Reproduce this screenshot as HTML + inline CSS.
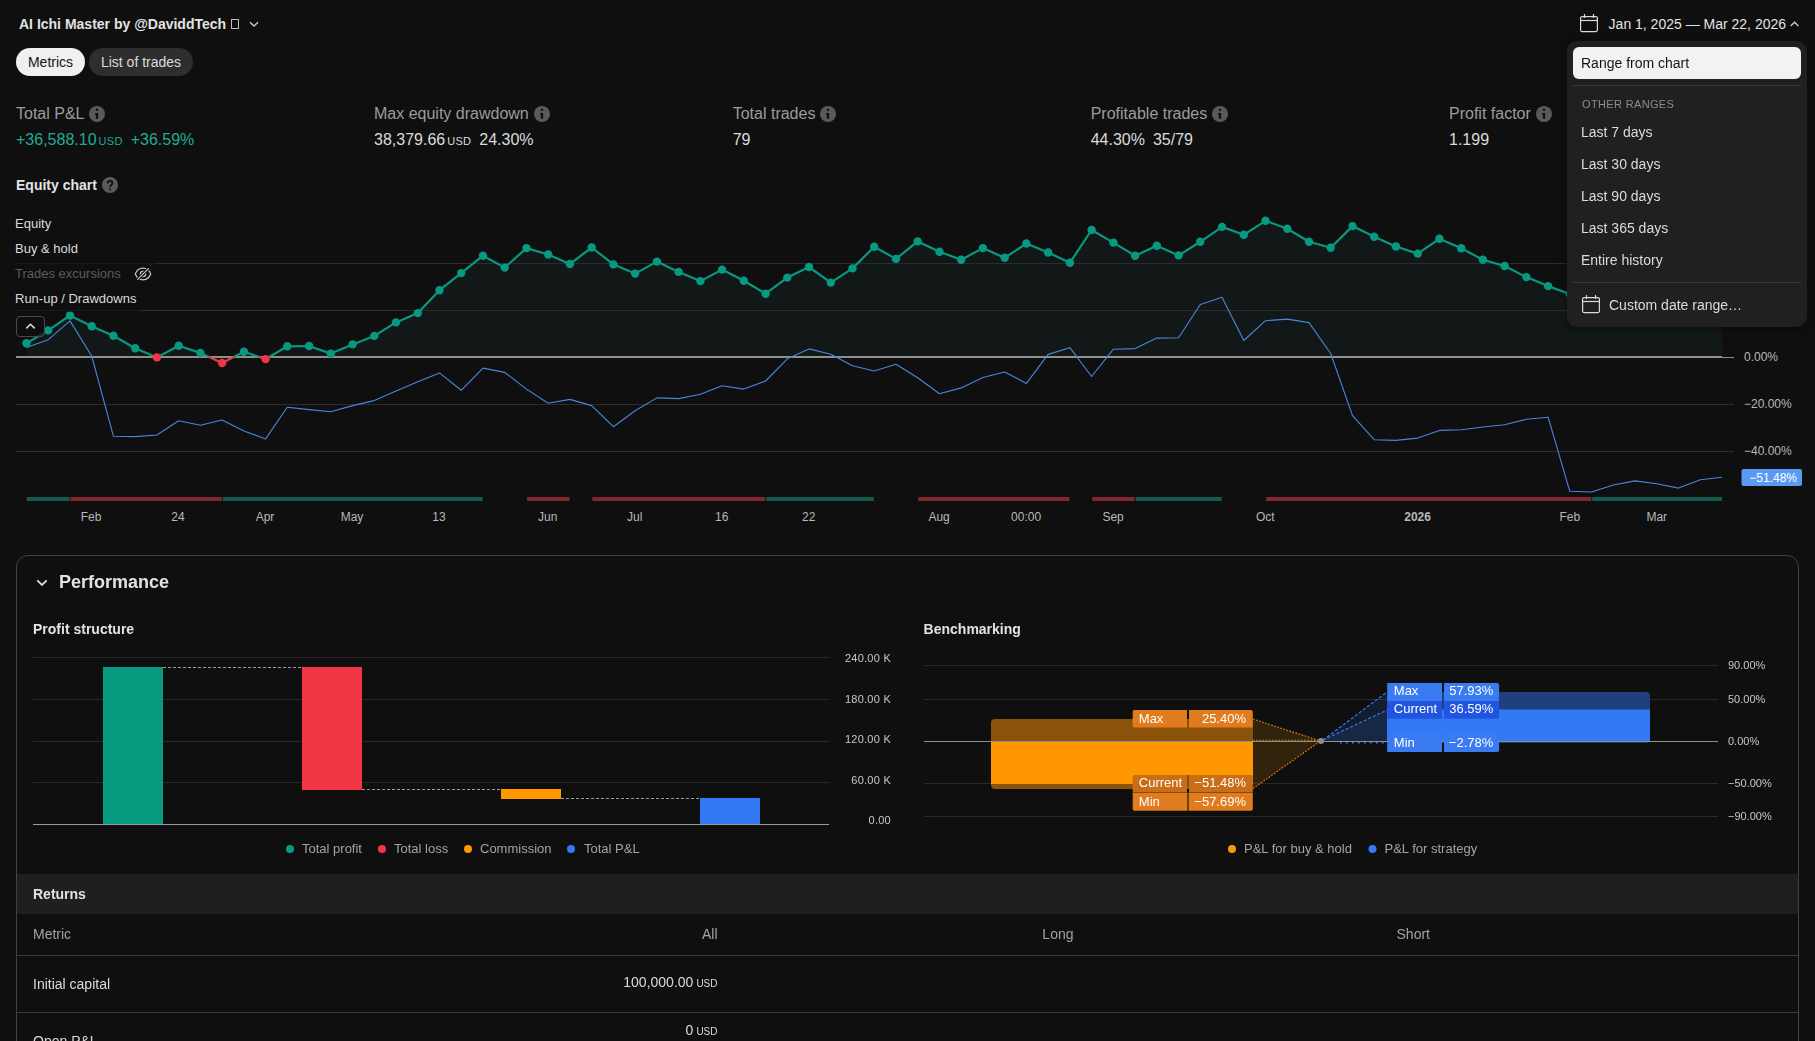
<!DOCTYPE html>
<html>
<head>
<meta charset="utf-8">
<style>
html,body{margin:0;padding:0;}
body{width:1815px;height:1041px;overflow:hidden;background:#0f0f0f;position:relative;font-family:"Liberation Sans",sans-serif;color:#dbdbdb;}
.a{position:absolute;white-space:nowrap;line-height:1;}
svg{position:absolute;left:0;top:0;}
.pill{position:absolute;height:28px;border-radius:14px;font-size:14px;line-height:28px;text-align:center;}
.lbl{font-size:16px;color:#9c9c9c;}
.val{font-size:16px;color:#dbdbdb;}
.usd{font-size:11px;letter-spacing:0.3px;}
.leg{font-size:13px;color:#dbdbdb;}
.dd{font-size:14px;color:#dbdbdb;}
.th{font-size:14px;color:#a3a3a3;}
.td{font-size:14px;color:#dbdbdb;}
</style>
</head>
<body>
<!-- Header -->
<div class="a" style="left:19px;top:17px;font-size:14px;font-weight:bold;color:#e3e3e3;">AI Ichi Master by @DaviddTech</div>
<div class="a" style="left:231px;top:19px;width:6px;height:8px;border:1px solid #bdbdbd;"></div>
<svg width="1815" height="1041" style="pointer-events:none">
  <path d="M250,22.3 L254,26 L258,22.3" fill="none" stroke="#c9c9c9" stroke-width="1.5"/>
</svg>

<div class="pill" style="left:16px;top:48px;width:69px;background:#f0f0f0;color:#131313;">Metrics</div>
<div class="pill" style="left:89px;top:48px;width:104px;background:#2e2e2e;color:#dbdbdb;">List of trades</div>

<!-- Metrics row -->
<div class="a lbl" style="left:16px;top:106px;">Total P&amp;L</div>
<div class="a val" style="left:16px;top:132px;color:#22ab94;">+36,588.10<span class="usd" style="margin-left:2px;">USD</span><span style="margin-left:8px;">+36.59%</span></div>
<div class="a lbl" style="left:374px;top:106px;">Max equity drawdown</div>
<div class="a val" style="left:374px;top:132px;">38,379.66<span class="usd" style="margin-left:2px;">USD</span><span style="margin-left:8px;">24.30%</span></div>
<div class="a lbl" style="left:732.7px;top:106px;">Total trades</div>
<div class="a val" style="left:732.7px;top:132px;">79</div>
<div class="a lbl" style="left:1090.7px;top:106px;">Profitable trades</div>
<div class="a val" style="left:1090.7px;top:132px;">44.30%<span style="margin-left:8px;">35/79</span></div>
<div class="a lbl" style="left:1449px;top:106px;">Profit factor</div>
<div class="a val" style="left:1449px;top:132px;">1.199</div>

<div class="a" style="left:16px;top:178px;font-size:14px;font-weight:bold;color:#e3e3e3;">Equity chart</div>

<!-- Equity chart SVG -->
<svg width="1815" height="1041">
  <defs>
    <clipPath id="above"><rect x="0" y="0" width="1815" height="357"/></clipPath>
    <clipPath id="below"><rect x="0" y="357" width="1815" height="700"/></clipPath>
  </defs>
  <!-- grid -->
  <path d="M26.5,357.0 L26.5,343.2 L48.2,330.4 L70.0,315.5 L91.7,326.3 L113.4,335.8 L135.2,348.2 L156.9,357.4 L178.7,345.8 L200.4,352.9 L222.1,363.0 L243.9,351.7 L265.6,359.1 L287.3,346.3 L309.1,346.0 L330.8,353.6 L352.6,344.4 L374.3,335.9 L396.0,322.4 L417.8,313.1 L439.5,290.2 L461.2,273.1 L483.0,255.7 L504.7,267.6 L526.5,248.1 L548.2,254.5 L569.9,264.0 L591.7,247.5 L613.4,264.4 L635.1,273.6 L656.9,261.6 L678.6,271.9 L700.4,281.1 L722.1,269.6 L743.8,280.7 L765.6,293.7 L787.3,277.6 L809.0,267.0 L830.8,282.6 L852.5,268.4 L874.2,246.7 L896.0,258.9 L917.7,241.4 L939.5,251.7 L961.2,259.7 L982.9,248.1 L1004.7,257.8 L1026.4,243.5 L1048.1,252.5 L1069.9,262.7 L1091.6,230.0 L1113.4,242.6 L1135.1,255.7 L1156.8,245.7 L1178.6,255.4 L1200.3,241.8 L1222.0,226.9 L1243.8,234.8 L1265.5,220.8 L1287.3,228.8 L1309.0,241.8 L1330.7,247.8 L1352.5,226.1 L1374.2,236.7 L1395.9,246.5 L1417.7,253.6 L1439.4,238.8 L1461.2,248.3 L1482.9,259.7 L1504.6,266.0 L1526.4,277.1 L1548.1,286.1 L1569.8,294.0 L1591.6,300.0 L1613.3,292.0 L1635.1,286.0 L1656.8,281.0 L1678.5,284.0 L1700.3,277.0 L1722.0,271.0 L1722.0,357.0 Z" fill="#111817" clip-path="url(#above)"/>
  <g stroke="#2c2c2c" stroke-width="1">
    <line x1="16" y1="263.5" x2="1734" y2="263.5"/>
    <line x1="16" y1="310.5" x2="1734" y2="310.5"/>
    <line x1="16" y1="404.5" x2="1734" y2="404.5"/>
    <line x1="16" y1="451.5" x2="1734" y2="451.5"/>
  </g>
  <line x1="16" y1="357" x2="1722" y2="357" stroke="#8f8f8f" stroke-width="2"/>
  <line x1="1722" y1="357.5" x2="1734" y2="357.5" stroke="#8f8f8f" stroke-width="1"/>
  <polyline points="26.5,347.4 48.2,339.7 70.0,320.9 91.7,356.0 113.4,436.2 135.2,436.6 156.9,435.0 178.7,420.7 200.4,425.3 222.1,420.0 243.9,430.9 265.6,438.9 287.3,407.3 309.1,409.6 330.8,411.7 352.6,405.6 374.3,400.6 396.0,390.9 417.8,381.7 439.5,372.9 461.2,390.3 483.0,368.1 504.7,372.4 526.5,389.1 548.2,403.3 569.9,399.4 591.7,405.6 613.4,426.7 635.1,410.7 656.9,397.9 678.6,398.6 700.4,394.3 722.1,385.7 743.8,389.1 765.6,381.0 787.3,358.8 809.0,348.9 830.8,354.2 852.5,365.8 874.2,371.0 896.0,364.2 917.7,377.8 939.5,393.7 961.2,387.9 982.9,377.5 1004.7,372.0 1026.4,383.4 1048.1,354.4 1069.9,347.7 1091.6,376.5 1113.4,349.2 1135.1,348.6 1156.8,338.1 1178.6,337.8 1200.3,304.5 1222.0,297.2 1243.8,340.5 1265.5,320.7 1287.3,319.1 1309.0,322.6 1330.7,353.5 1352.5,415.6 1374.2,439.7 1395.9,440.4 1417.7,438.1 1439.4,430.4 1461.2,429.7 1482.9,427.0 1504.6,424.7 1526.4,419.3 1548.1,417.2 1569.8,491.3 1591.6,492.0 1613.3,485.0 1635.1,480.9 1656.8,483.7 1678.5,488.1 1700.3,479.7 1722.0,477.2" fill="none" stroke="#4a86dc" stroke-width="1.1" stroke-linejoin="round"/>
  <polyline points="26.5,343.2 48.2,330.4 70.0,315.5 91.7,326.3 113.4,335.8 135.2,348.2 156.9,357.4 178.7,345.8 200.4,352.9 222.1,363.0 243.9,351.7 265.6,359.1 287.3,346.3 309.1,346.0 330.8,353.6 352.6,344.4 374.3,335.9 396.0,322.4 417.8,313.1 439.5,290.2 461.2,273.1 483.0,255.7 504.7,267.6 526.5,248.1 548.2,254.5 569.9,264.0 591.7,247.5 613.4,264.4 635.1,273.6 656.9,261.6 678.6,271.9 700.4,281.1 722.1,269.6 743.8,280.7 765.6,293.7 787.3,277.6 809.0,267.0 830.8,282.6 852.5,268.4 874.2,246.7 896.0,258.9 917.7,241.4 939.5,251.7 961.2,259.7 982.9,248.1 1004.7,257.8 1026.4,243.5 1048.1,252.5 1069.9,262.7 1091.6,230.0 1113.4,242.6 1135.1,255.7 1156.8,245.7 1178.6,255.4 1200.3,241.8 1222.0,226.9 1243.8,234.8 1265.5,220.8 1287.3,228.8 1309.0,241.8 1330.7,247.8 1352.5,226.1 1374.2,236.7 1395.9,246.5 1417.7,253.6 1439.4,238.8 1461.2,248.3 1482.9,259.7 1504.6,266.0 1526.4,277.1 1548.1,286.1 1569.8,294.0 1591.6,300.0 1613.3,292.0 1635.1,286.0 1656.8,281.0 1678.5,284.0 1700.3,277.0 1722.0,271.0" fill="none" stroke="#089981" stroke-width="2.2" stroke-linejoin="round" clip-path="url(#above)"/>
  <polyline points="26.5,343.2 48.2,330.4 70.0,315.5 91.7,326.3 113.4,335.8 135.2,348.2 156.9,357.4 178.7,345.8 200.4,352.9 222.1,363.0 243.9,351.7 265.6,359.1 287.3,346.3 309.1,346.0 330.8,353.6 352.6,344.4 374.3,335.9 396.0,322.4 417.8,313.1 439.5,290.2 461.2,273.1 483.0,255.7 504.7,267.6 526.5,248.1 548.2,254.5 569.9,264.0 591.7,247.5 613.4,264.4 635.1,273.6 656.9,261.6 678.6,271.9 700.4,281.1 722.1,269.6 743.8,280.7 765.6,293.7 787.3,277.6 809.0,267.0 830.8,282.6 852.5,268.4 874.2,246.7 896.0,258.9 917.7,241.4 939.5,251.7 961.2,259.7 982.9,248.1 1004.7,257.8 1026.4,243.5 1048.1,252.5 1069.9,262.7 1091.6,230.0 1113.4,242.6 1135.1,255.7 1156.8,245.7 1178.6,255.4 1200.3,241.8 1222.0,226.9 1243.8,234.8 1265.5,220.8 1287.3,228.8 1309.0,241.8 1330.7,247.8 1352.5,226.1 1374.2,236.7 1395.9,246.5 1417.7,253.6 1439.4,238.8 1461.2,248.3 1482.9,259.7 1504.6,266.0 1526.4,277.1 1548.1,286.1 1569.8,294.0 1591.6,300.0 1613.3,292.0 1635.1,286.0 1656.8,281.0 1678.5,284.0 1700.3,277.0 1722.0,271.0" fill="none" stroke="#f23645" stroke-width="2.2" stroke-linejoin="round" clip-path="url(#below)"/>
  <circle cx="26.5" cy="343.2" r="4.2" fill="#089981"/>
<circle cx="48.2" cy="330.4" r="4.2" fill="#089981"/>
<circle cx="70.0" cy="315.5" r="4.2" fill="#089981"/>
<circle cx="91.7" cy="326.3" r="4.2" fill="#089981"/>
<circle cx="113.4" cy="335.8" r="4.2" fill="#089981"/>
<circle cx="135.2" cy="348.2" r="4.2" fill="#089981"/>
<circle cx="156.9" cy="357.4" r="4.2" fill="#f23645"/>
<circle cx="178.7" cy="345.8" r="4.2" fill="#089981"/>
<circle cx="200.4" cy="352.9" r="4.2" fill="#089981"/>
<circle cx="222.1" cy="363.0" r="4.2" fill="#f23645"/>
<circle cx="243.9" cy="351.7" r="4.2" fill="#089981"/>
<circle cx="265.6" cy="359.1" r="4.2" fill="#f23645"/>
<circle cx="287.3" cy="346.3" r="4.2" fill="#089981"/>
<circle cx="309.1" cy="346.0" r="4.2" fill="#089981"/>
<circle cx="330.8" cy="353.6" r="4.2" fill="#089981"/>
<circle cx="352.6" cy="344.4" r="4.2" fill="#089981"/>
<circle cx="374.3" cy="335.9" r="4.2" fill="#089981"/>
<circle cx="396.0" cy="322.4" r="4.2" fill="#089981"/>
<circle cx="417.8" cy="313.1" r="4.2" fill="#089981"/>
<circle cx="439.5" cy="290.2" r="4.2" fill="#089981"/>
<circle cx="461.2" cy="273.1" r="4.2" fill="#089981"/>
<circle cx="483.0" cy="255.7" r="4.2" fill="#089981"/>
<circle cx="504.7" cy="267.6" r="4.2" fill="#089981"/>
<circle cx="526.5" cy="248.1" r="4.2" fill="#089981"/>
<circle cx="548.2" cy="254.5" r="4.2" fill="#089981"/>
<circle cx="569.9" cy="264.0" r="4.2" fill="#089981"/>
<circle cx="591.7" cy="247.5" r="4.2" fill="#089981"/>
<circle cx="613.4" cy="264.4" r="4.2" fill="#089981"/>
<circle cx="635.1" cy="273.6" r="4.2" fill="#089981"/>
<circle cx="656.9" cy="261.6" r="4.2" fill="#089981"/>
<circle cx="678.6" cy="271.9" r="4.2" fill="#089981"/>
<circle cx="700.4" cy="281.1" r="4.2" fill="#089981"/>
<circle cx="722.1" cy="269.6" r="4.2" fill="#089981"/>
<circle cx="743.8" cy="280.7" r="4.2" fill="#089981"/>
<circle cx="765.6" cy="293.7" r="4.2" fill="#089981"/>
<circle cx="787.3" cy="277.6" r="4.2" fill="#089981"/>
<circle cx="809.0" cy="267.0" r="4.2" fill="#089981"/>
<circle cx="830.8" cy="282.6" r="4.2" fill="#089981"/>
<circle cx="852.5" cy="268.4" r="4.2" fill="#089981"/>
<circle cx="874.2" cy="246.7" r="4.2" fill="#089981"/>
<circle cx="896.0" cy="258.9" r="4.2" fill="#089981"/>
<circle cx="917.7" cy="241.4" r="4.2" fill="#089981"/>
<circle cx="939.5" cy="251.7" r="4.2" fill="#089981"/>
<circle cx="961.2" cy="259.7" r="4.2" fill="#089981"/>
<circle cx="982.9" cy="248.1" r="4.2" fill="#089981"/>
<circle cx="1004.7" cy="257.8" r="4.2" fill="#089981"/>
<circle cx="1026.4" cy="243.5" r="4.2" fill="#089981"/>
<circle cx="1048.1" cy="252.5" r="4.2" fill="#089981"/>
<circle cx="1069.9" cy="262.7" r="4.2" fill="#089981"/>
<circle cx="1091.6" cy="230.0" r="4.2" fill="#089981"/>
<circle cx="1113.4" cy="242.6" r="4.2" fill="#089981"/>
<circle cx="1135.1" cy="255.7" r="4.2" fill="#089981"/>
<circle cx="1156.8" cy="245.7" r="4.2" fill="#089981"/>
<circle cx="1178.6" cy="255.4" r="4.2" fill="#089981"/>
<circle cx="1200.3" cy="241.8" r="4.2" fill="#089981"/>
<circle cx="1222.0" cy="226.9" r="4.2" fill="#089981"/>
<circle cx="1243.8" cy="234.8" r="4.2" fill="#089981"/>
<circle cx="1265.5" cy="220.8" r="4.2" fill="#089981"/>
<circle cx="1287.3" cy="228.8" r="4.2" fill="#089981"/>
<circle cx="1309.0" cy="241.8" r="4.2" fill="#089981"/>
<circle cx="1330.7" cy="247.8" r="4.2" fill="#089981"/>
<circle cx="1352.5" cy="226.1" r="4.2" fill="#089981"/>
<circle cx="1374.2" cy="236.7" r="4.2" fill="#089981"/>
<circle cx="1395.9" cy="246.5" r="4.2" fill="#089981"/>
<circle cx="1417.7" cy="253.6" r="4.2" fill="#089981"/>
<circle cx="1439.4" cy="238.8" r="4.2" fill="#089981"/>
<circle cx="1461.2" cy="248.3" r="4.2" fill="#089981"/>
<circle cx="1482.9" cy="259.7" r="4.2" fill="#089981"/>
<circle cx="1504.6" cy="266.0" r="4.2" fill="#089981"/>
<circle cx="1526.4" cy="277.1" r="4.2" fill="#089981"/>
<circle cx="1548.1" cy="286.1" r="4.2" fill="#089981"/>
<circle cx="1569.8" cy="294.0" r="4.2" fill="#089981"/>
<circle cx="1591.6" cy="300.0" r="4.2" fill="#089981"/>
<circle cx="1613.3" cy="292.0" r="4.2" fill="#089981"/>
<circle cx="1635.1" cy="286.0" r="4.2" fill="#089981"/>
<circle cx="1656.8" cy="281.0" r="4.2" fill="#089981"/>
<circle cx="1678.5" cy="284.0" r="4.2" fill="#089981"/>
<circle cx="1700.3" cy="277.0" r="4.2" fill="#089981"/>
<circle cx="1722.0" cy="271.0" r="4.2" fill="#089981"/>
  <rect x="26.5" y="497" width="43.1" height="4" fill="#125b4f"/>
<rect x="70.6" y="497" width="151.2" height="4" fill="#82262e"/>
<rect x="222.7" y="497" width="259.8" height="4" fill="#125b4f"/>
<rect x="527.1" y="497" width="42.5" height="4" fill="#82262e"/>
<rect x="592.3" y="497" width="172.9" height="4" fill="#82262e"/>
<rect x="766.2" y="497" width="107.7" height="4" fill="#125b4f"/>
<rect x="918.3" y="497" width="151.2" height="4" fill="#82262e"/>
<rect x="1092.2" y="497" width="42.5" height="4" fill="#82262e"/>
<rect x="1135.7" y="497" width="85.9" height="4" fill="#125b4f"/>
<rect x="1266.1" y="497" width="325.1" height="4" fill="#82262e"/>
<rect x="1592.2" y="497" width="129.8" height="4" fill="#125b4f"/>
  <g font-family="Liberation Sans" font-size="12" fill="#b8b8b8">
  <text x="91.0" y="521" text-anchor="middle">Feb</text>
<text x="178.0" y="521" text-anchor="middle">24</text>
<text x="265.0" y="521" text-anchor="middle">Apr</text>
<text x="352.0" y="521" text-anchor="middle">May</text>
<text x="439.0" y="521" text-anchor="middle">13</text>
<text x="547.7" y="521" text-anchor="middle">Jun</text>
<text x="634.7" y="521" text-anchor="middle">Jul</text>
<text x="721.7" y="521" text-anchor="middle">16</text>
<text x="808.7" y="521" text-anchor="middle">22</text>
<text x="939.1" y="521" text-anchor="middle">Aug</text>
<text x="1026.1" y="521" text-anchor="middle">00:00</text>
<text x="1113.1" y="521" text-anchor="middle">Sep</text>
<text x="1265.3" y="521" text-anchor="middle">Oct</text>
<text x="1417.6" y="521" text-anchor="middle" font-weight="bold">2026</text>
<text x="1569.8" y="521" text-anchor="middle">Feb</text>
<text x="1656.8" y="521" text-anchor="middle">Mar</text>
  </g>
  <g font-family="Liberation Sans" font-size="12" fill="#b8b8b8">
    <text x="1744" y="361">0.00%</text>
    <text x="1744" y="407.6">−20.00%</text>
    <text x="1744" y="454.6">−40.00%</text>
  </g>
  <rect x="1741.5" y="469" width="60.5" height="17" rx="2" fill="#5a9af5"/>
  <text x="1797" y="482" text-anchor="end" font-family="Liberation Sans" font-size="12" fill="#ffffff">−51.48%</text>
</svg>

<!-- chart legend -->
<div class="a leg" style="left:16px;top:210.5px;height:26px;line-height:25px;width:40px;background:rgba(15,15,15,0.6);"><span style="margin-left:-1px">Equity</span></div>
<div class="a leg" style="left:16px;top:235.5px;height:26px;line-height:25px;width:66px;background:rgba(15,15,15,0.6);"><span style="margin-left:-1px">Buy &amp; hold</span></div>
<div class="a leg" style="left:16px;top:260.5px;height:26px;line-height:25px;width:141px;color:#5c5c5c;background:rgba(15,15,15,0.6);"><span style="margin-left:-1px">Trades excursions</span></div>
<div class="a leg" style="left:16px;top:285.5px;height:26px;line-height:25px;width:124px;background:rgba(15,15,15,0.6);"><span style="margin-left:-1px">Run-up / Drawdowns</span></div>
<div class="a" style="left:16px;top:316px;width:27px;height:19px;border:1px solid #4a4a4a;border-radius:4px;background:rgba(15,15,15,0.75);"></div>
<svg width="1815" height="1041">
  <path d="M26.3,328.4 L30.5,324.3 L34.7,328.4" fill="none" stroke="#dcdcdc" stroke-width="1.5"/>
  <!-- eye slash -->
  <g fill="none" stroke-linecap="round">
    <path d="M135.3,274 C137,269.6 140,268.2 143,268.2 C146,268.2 149,269.6 150.7,274 C149,278.4 146,279.8 143,279.8 C140,279.8 137,278.4 135.3,274 Z" stroke="#c8c8c8" stroke-width="1.2"/>
    <circle cx="143" cy="274" r="2.7" stroke="#c8c8c8" stroke-width="1.2"/>
    <line x1="137.6" y1="279.4" x2="148.4" y2="268.6" stroke="#0f0f0f" stroke-width="3"/>
    <line x1="137.6" y1="279.4" x2="148.4" y2="268.6" stroke="#c8c8c8" stroke-width="1.2"/>
  </g>
  <!-- info icons -->
  <g>
    <circle cx="97" cy="114" r="8" fill="#5a5a5a"/>
    <circle cx="542" cy="114" r="8" fill="#5a5a5a"/>
    <circle cx="828" cy="114" r="8" fill="#5a5a5a"/>
    <circle cx="1220" cy="114" r="8" fill="#5a5a5a"/>
    <circle cx="1544" cy="114" r="8" fill="#5a5a5a"/>
    <circle cx="110" cy="185" r="8" fill="#5a5a5a"/>
  </g>
<rect x="95.9" y="108.7" width="2.2" height="2.2" fill="#0f0f0f"/><path d="M95,113 H98.1 V118.8 H95.9 V114.4 H95 Z" fill="#0f0f0f"/>
<rect x="540.9" y="108.7" width="2.2" height="2.2" fill="#0f0f0f"/><path d="M540,113 H543.1 V118.8 H540.9 V114.4 H540 Z" fill="#0f0f0f"/>
<rect x="826.9" y="108.7" width="2.2" height="2.2" fill="#0f0f0f"/><path d="M826,113 H829.1 V118.8 H826.9 V114.4 H826 Z" fill="#0f0f0f"/>
<rect x="1218.9" y="108.7" width="2.2" height="2.2" fill="#0f0f0f"/><path d="M1218,113 H1221.1 V118.8 H1218.9 V114.4 H1218 Z" fill="#0f0f0f"/>
<rect x="1542.9" y="108.7" width="2.2" height="2.2" fill="#0f0f0f"/><path d="M1542,113 H1545.1 V118.8 H1542.9 V114.4 H1542 Z" fill="#0f0f0f"/>
<path d="M107.7,183.4 C107.7,181.8 108.7,180.9 110,180.9 C111.4,180.9 112.4,181.8 112.4,183.1 C112.4,184.6 110.1,185.1 110.1,187.1" fill="none" stroke="#0f0f0f" stroke-width="1.8"/><rect x="109.2" y="188.4" width="1.8" height="1.8" fill="#0f0f0f"/>

</svg>

<!-- Date range header -->
<svg width="1815" height="1041">
  <g fill="none" stroke="#dbdbdb" stroke-width="1.2">
    <rect x="1580.6" y="16.6" width="16.8" height="15" rx="1.5"/>
    <line x1="1580.6" y1="20.5" x2="1597.4" y2="20.5"/>
    <line x1="1584.5" y1="14" x2="1584.5" y2="18"/>
    <line x1="1593.5" y1="14" x2="1593.5" y2="18"/>
  </g>
  <path d="M1790.7,26 L1794.6,22.2 L1798.5,26" fill="none" stroke="#d0d0d0" stroke-width="1.2"/>
</svg>
<div class="a" style="left:1608.6px;top:17px;font-size:14px;color:#e3e3e3;">Jan 1, 2025 — Mar 22, 2026</div>

<!-- Dropdown -->
<div style="position:absolute;left:0;top:0;width:1815px;height:1041px;will-change:transform;pointer-events:none;">
<div class="a" style="left:1567px;top:41px;width:240px;height:286px;background:#202020;border-radius:10px;box-shadow:0 2px 8px rgba(0,0,0,0.4);"></div>
<div class="a" style="left:1573px;top:47px;width:228px;height:32px;background:#f2f2f2;border-radius:6px;"></div>
<div class="a dd" style="left:1581px;top:56px;color:#131313;">Range from chart</div>
<div class="a" style="left:1573px;top:85px;width:228px;height:1px;background:#3a3a3a;"></div>
<div class="a" style="left:1582px;top:99px;font-size:11px;color:#8c8c8c;letter-spacing:0.35px;">OTHER RANGES</div>
<div class="a dd" style="left:1581px;top:125px;">Last 7 days</div>
<div class="a dd" style="left:1581px;top:157px;">Last 30 days</div>
<div class="a dd" style="left:1581px;top:189px;">Last 90 days</div>
<div class="a dd" style="left:1581px;top:221px;">Last 365 days</div>
<div class="a dd" style="left:1581px;top:253px;">Entire history</div>
<div class="a" style="left:1573px;top:282px;width:228px;height:1px;background:#3a3a3a;"></div>
<svg width="1815" height="1041">
  <g fill="none" stroke="#dbdbdb" stroke-width="1.2">
    <rect x="1582.6" y="297.6" width="16.8" height="15" rx="1.5"/>
    <line x1="1582.6" y1="301.5" x2="1599.4" y2="301.5"/>
    <line x1="1586.5" y1="295" x2="1586.5" y2="299"/>
    <line x1="1595.5" y1="295" x2="1595.5" y2="299"/>
  </g>
</svg>
<div class="a dd" style="left:1609px;top:298px;">Custom date range…</div>
</div>

<!-- Performance panel -->
<div class="a" style="left:16px;top:555px;width:1781px;height:600px;border:1px solid #424242;border-radius:12px;"></div>
<svg width="1815" height="1041">
  <path d="M37.3,580.3 L42,585 L46.7,580.3" fill="none" stroke="#dbdbdb" stroke-width="1.8"/>
</svg>
<div class="a" style="left:59px;top:573px;font-size:18px;font-weight:bold;color:#e3e3e3;">Performance</div>
<div class="a" style="left:33px;top:622px;font-size:14px;font-weight:bold;color:#e3e3e3;">Profit structure</div>
<div class="a" style="left:923.6px;top:622px;font-size:14px;font-weight:bold;color:#e3e3e3;">Benchmarking</div>

<svg width="1815" height="1041">
  <!-- profit structure grid -->
  <g stroke="#2a2a2a" stroke-width="1">
    <line x1="33" y1="657.5" x2="829" y2="657.5"/>
    <line x1="33" y1="699.5" x2="829" y2="699.5"/>
    <line x1="33" y1="741.5" x2="829" y2="741.5"/>
    <line x1="33" y1="782.5" x2="829" y2="782.5"/>
  </g>
  <rect x="103" y="667" width="60" height="157" fill="#089981"/>
  <rect x="302" y="667" width="60" height="123" fill="#f23645"/>
  <rect x="501" y="789" width="60" height="10" fill="#ff9800"/>
  <rect x="700" y="798" width="60" height="26" fill="#3179f5"/>
  <g stroke="#9a9a9a" stroke-width="1" stroke-dasharray="3,2">
    <line x1="163" y1="667.5" x2="302" y2="667.5"/>
    <line x1="362" y1="789.5" x2="501" y2="789.5"/>
    <line x1="561" y1="798.5" x2="700" y2="798.5"/>
  </g>
  <line x1="33" y1="824.5" x2="829" y2="824.5" stroke="#9a9a9a" stroke-width="1"/>
  <g font-family="Liberation Sans" font-size="11" fill="#c8c8c8" text-anchor="end" letter-spacing="0.25">
    <text x="891" y="662">240.00 K</text>
    <text x="891" y="703">180.00 K</text>
    <text x="891" y="743">120.00 K</text>
    <text x="891" y="784">60.00 K</text>
    <text x="891" y="824">0.00</text>
  </g>
  <circle cx="290" cy="849" r="4" fill="#089981"/>
  <circle cx="382" cy="849" r="4" fill="#f23645"/>
  <circle cx="468" cy="849" r="4" fill="#ff9800"/>
  <circle cx="571" cy="849" r="4" fill="#3179f5"/>
  <g font-family="Liberation Sans" font-size="13" fill="#a3a3a3">
    <text x="302" y="852.6">Total profit</text>
    <text x="394" y="852.6">Total loss</text>
    <text x="480" y="852.6">Commission</text>
    <text x="584" y="852.6">Total P&amp;L</text>
  </g>

  <!-- benchmarking grid -->
  <g stroke="#2a2a2a" stroke-width="1">
    <line x1="924" y1="665.5" x2="1718" y2="665.5"/>
    <line x1="924" y1="699.5" x2="1718" y2="699.5"/>
    <line x1="924" y1="783.5" x2="1718" y2="783.5"/>
    <line x1="924" y1="816.5" x2="1718" y2="816.5"/>
  </g>
  <rect x="991" y="719" width="262" height="70" rx="4" fill="#8a5309"/>
  <rect x="991" y="741" width="262" height="43" fill="#ff9800"/>
  <path d="M1253,719 L1321,741 L1253,788.5 Z" fill="rgba(255,152,0,0.15)"/>
  <g stroke="#ec8c0c" stroke-width="1.1" stroke-dasharray="1.6,1.6" fill="none">
    <line x1="1253" y1="719" x2="1319" y2="740.5"/>
    <line x1="1253" y1="788.5" x2="1319" y2="742"/>
    <line x1="1253" y1="740.3" x2="1316" y2="740.3"/>
  </g>
  <rect x="1387" y="692" width="263" height="51" rx="4" fill="#213f7f"/>
  <rect x="1387" y="709.5" width="263" height="32" fill="#3179f5"/>
  <path d="M1321,741 L1387,692 L1387,743 Z" fill="rgba(49,121,245,0.13)"/>
  <path d="M1321,741 L1387,710 L1387,743 Z" fill="rgba(49,121,245,0.12)"/>
  <g stroke="#3a7ef0" stroke-width="1.1" stroke-dasharray="3,2" fill="none">
    <line x1="1323" y1="740" x2="1387" y2="692"/>
    <line x1="1323" y1="740" x2="1387" y2="710"/>
  </g>
  <line x1="924" y1="741.5" x2="1718" y2="741.5" stroke="#8f8f8f" stroke-width="1"/>
  <line x1="1340" y1="742.8" x2="1387" y2="742.8" stroke="#3a7ef0" stroke-width="1.6" stroke-dasharray="1.6,4.4"/>
  <circle cx="1321" cy="741" r="3" fill="#8f8f8f"/>
  <!-- orange labels -->
  <g>
    <path d="M1134.5,710 H1187 V727.6 H1134.5 Q1132.7,727.6 1132.7,725.8 V711.8 Q1132.7,710 1134.5,710 Z" fill="#e07b1e"/>
    <path d="M1189,710 H1251 Q1252.8,710 1252.8,711.8 V727.6 H1189 Z" fill="#e07b1e"/>
    <path d="M1134.5,775 H1187 V792.6 H1132.7 V776.8 Q1132.7,775 1134.5,775 Z" fill="#c96d17"/>
    <path d="M1189,775 H1251 Q1252.8,775 1252.8,776.8 V792.6 H1189 Z" fill="#c96d17"/>
    <path d="M1132.7,792.8 H1187 V810.8 H1134.5 Q1132.7,810.8 1132.7,809 Z" fill="#e07b1e"/>
    <path d="M1189,792.8 H1252.8 V809 Q1252.8,810.8 1251,810.8 H1189 Z" fill="#e07b1e"/>
    <rect x="1187" y="719" width="2" height="8.6" fill="#8a5309"/>
    <rect x="1187" y="775" width="2" height="13.5" fill="#8a5309"/>
    <rect x="1187" y="792.6" width="2" height="18.2" fill="#6e420a"/>
  </g>
  <g font-family="Liberation Sans" font-size="13" fill="#ffffff">
    <text x="1138.8" y="723">Max</text>
    <text x="1246" y="723" text-anchor="end">25.40%</text>
    <text x="1138.8" y="787.4">Current</text>
    <text x="1246" y="787.4" text-anchor="end">−51.48%</text>
    <text x="1138.8" y="806.2">Min</text>
    <text x="1246" y="806.2" text-anchor="end">−57.69%</text>
  </g>
  <!-- blue labels -->
  <g>
    <path d="M1387.2,683 H1442 V701 H1387.2 Z" fill="#3a7bf2"/>
    <path d="M1444,683 H1497.3 Q1499.1,683 1499.1,684.8 V701 H1444 Z" fill="#3a7bf2"/>
    <path d="M1387.2,701 H1442 V718.8 H1387.2 Z" fill="#2155e0"/>
    <path d="M1444,701 H1499.1 V717 Q1499.1,718.8 1497.3,718.8 H1444 Z" fill="#2155e0"/>
    <path d="M1387.2,734.3 H1442 V752 H1387.2 Z" fill="#3a7bf2"/>
    <path d="M1444,734.3 H1497.3 Q1499.1,734.3 1499.1,736.1 V750.2 Q1499.1,752 1497.3,752 H1444 Z" fill="#3a7bf2"/>
    <rect x="1442" y="692.5" width="2" height="8.5" fill="#213f7f"/>
    <rect x="1442" y="701" width="2" height="8.5" fill="#213f7f"/>
    <rect x="1442" y="709.5" width="2" height="9.3" fill="#3179f5"/>
    <rect x="1442" y="734.3" width="2" height="6.7" fill="#3179f5"/>
  </g>
  <g font-family="Liberation Sans" font-size="13" fill="#ffffff">
    <text x="1393.8" y="694.8">Max</text>
    <text x="1493.3" y="694.8" text-anchor="end">57.93%</text>
    <text x="1393.8" y="712.8">Current</text>
    <text x="1493.3" y="712.8" text-anchor="end">36.59%</text>
    <text x="1393.8" y="746.8">Min</text>
    <text x="1493.3" y="746.8" text-anchor="end">−2.78%</text>
  </g>
  <g font-family="Liberation Sans" font-size="11" fill="#c8c8c8">
    <text x="1728" y="669">90.00%</text>
    <text x="1728" y="703">50.00%</text>
    <text x="1728" y="745">0.00%</text>
    <text x="1728" y="787">−50.00%</text>
    <text x="1728" y="820">−90.00%</text>
  </g>
  <circle cx="1232" cy="849" r="4" fill="#ff9800"/>
  <circle cx="1372.5" cy="849" r="4" fill="#3179f5"/>
  <g font-family="Liberation Sans" font-size="13" fill="#a3a3a3">
    <text x="1244" y="852.6">P&amp;L for buy &amp; hold</text>
    <text x="1384.5" y="852.6">P&amp;L for strategy</text>
  </g>
</svg>

<!-- Returns table -->
<div class="a" style="left:17px;top:874px;width:1781px;height:40px;background:#1f1f1f;"></div>
<div class="a" style="left:33px;top:887px;font-size:14px;font-weight:bold;color:#e3e3e3;">Returns</div>
<div class="a th" style="left:33px;top:927px;">Metric</div>
<div class="a th" style="left:617px;top:927px;width:100.5px;text-align:right;">All</div>
<div class="a th" style="left:973px;top:927px;width:100.5px;text-align:right;">Long</div>
<div class="a th" style="left:1330px;top:927px;width:100px;text-align:right;">Short</div>
<div class="a" style="left:17px;top:955px;width:1781px;height:1px;background:#3a3a3a;"></div>
<div class="a td" style="left:33px;top:977px;">Initial capital</div>
<div class="a td" style="left:517px;top:975px;width:200.5px;text-align:right;">100,000.00<span style="font-size:10px;margin-left:3px;">USD</span></div>
<div class="a" style="left:17px;top:1012px;width:1781px;height:1px;background:#3a3a3a;"></div>
<div class="a td" style="left:517px;top:1023px;width:200.5px;text-align:right;">0<span style="font-size:10px;margin-left:3px;">USD</span></div>
<div class="a td" style="left:33px;top:1034px;">Open P&amp;L</div>
</body>
</html>
